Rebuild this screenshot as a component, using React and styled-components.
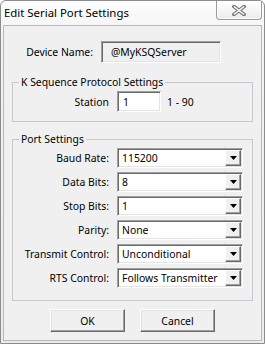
import React from 'react'
import styled, { createGlobalStyle } from 'styled-components'

const GlobalStyle = createGlobalStyle`
  html, body {
    margin: 0;
    padding: 0;
    background: #ffffff;
  }
  body {
    font-family: "Noto Sans", "Open Sans", sans-serif;
    font-size: 10.4px;
    color: #000;
  }
`

const portRows = [
  { label: 'Baud Rate:', value: '115200' },
  { label: 'Data Bits:', value: '8' },
  { label: 'Stop Bits:', value: '1' },
  { label: 'Parity:', value: 'None' },
  { label: 'Transmit Control:', value: 'Unconditional' },
  { label: 'RTS Control:', value: 'Follows Transmitter' },
]

const CloseIcon = () => (
  <svg width="14" height="11" viewBox="0 0 14 11">
    <path d="M2 1.5 L12 9.5 M12 1.5 L2 9.5" stroke="#7d7d7d" strokeWidth="3.6" strokeLinecap="square" fill="none" />
    <path d="M2 1.5 L12 9.5 M12 1.5 L2 9.5" stroke="#ffffff" strokeWidth="1.4" strokeLinecap="butt" fill="none" />
  </svg>
)

const DropArrow = () => (
  <svg width="7" height="4" viewBox="0 0 7 4">
    <path d="M0 0 H7 L3.5 4 Z" fill="#000" />
  </svg>
)

const App = () => {
  return (
    <>
      <GlobalStyle />
      <Window>
        <TitleBar>
          <Title>Edit Serial Port Settings</Title>
          <CloseButton><CloseIcon /></CloseButton>
        </TitleBar>
        <Client>
          <NameRow>
            <NameLabel>Device Name:</NameLabel>
            <TextBox readOnly width={120} height={22} indent={9}>@MyKSQServer</TextBox>
          </NameRow>

          <Group>
            <Legend>K Sequence Protocol Settings</Legend>
            <Row>
              <FieldLabel>Station</FieldLabel>
              <TextBox width={44} height={21} indent={5}>1</TextBox>
              <Hint>1 - 90</Hint>
            </Row>
          </Group>

          <Group bottom={12}>
            <Legend>Port Settings</Legend>
            <Rows>
              {portRows.map((r) => (
                <Row key={r.label}>
                  <FieldLabel>{r.label}</FieldLabel>
                  <Combo>
                    <ComboValue>{r.value}</ComboValue>
                    <DropButton><DropArrow /></DropButton>
                  </Combo>
                </Row>
              ))}
            </Rows>
          </Group>

          <Buttons>
            <PushButton>OK</PushButton>
            <PushButton>Cancel</PushButton>
          </Buttons>
        </Client>
      </Window>
    </>
  )
}

export default App

const Window = styled.div`
box-sizing: border-box;
width: 265px;
height: 344px;
display: flex;
flex-direction: column;
border: 1px solid #8c8c8c;
border-radius: 6px 6px 0 0;
padding: 0 2px 2px 2px;
background: linear-gradient(#fdfdfd, #f2f2f2 40px, #ececec);
`

const TitleBar = styled.div`
height: 24px;
display: flex;
justify-content: space-between;
align-items: flex-start;
flex-shrink: 0;
`

const Title = styled.div`
padding: 4px 0 0 1px;
font-size: 11.4px;
line-height: 16px;
color: #000;
`

const CloseButton = styled.div`
box-sizing: border-box;
width: 46px;
height: 19px;
display: flex;
align-items: center;
justify-content: center;
border: 1px solid #9a9a9a;
border-top: none;
border-radius: 0 0 4px 4px;
background: linear-gradient(#ffffff, #ececec);
box-shadow: inset 0 0 0 1px rgba(255, 255, 255, 0.8);
`

const Client = styled.div`
flex: 1;
display: flex;
flex-direction: column;
background: #f0f0f0;
border: 1px solid #b9b9b9;
padding-top: 15px;
`

const NameRow = styled.div`
display: flex;
align-items: center;
`

const NameLabel = styled.div`
width: 89px;
margin-right: 8px;
text-align: right;
`

const TextBox = styled.div`
box-sizing: border-box;
width: ${(p) => p.width}px;
height: ${(p) => p.height}px;
padding-left: ${(p) => p.indent}px;
display: flex;
align-items: center;
background: ${(p) => (p.readOnly ? '#f0f0f0' : '#ffffff')};
border: 1px solid;
border-color: #a0a0a0 #ffffff #ffffff #a0a0a0;
box-shadow: inset 1px 1px 0 #696969, inset -1px -1px 0 #e3e3e3;
`

const Group = styled.fieldset`
margin: 11px 8px 0 8px;
padding: 1px 8px ${(p) => p.bottom || 9}px 0;
border: 1px solid #c5c9cd;
min-width: 0;
& + & {
  margin-top: 9px;
}
`

const Legend = styled.legend`
margin-left: 6px;
padding: 0 2px;
line-height: 16px;
`

const Rows = styled.div`
display: flex;
flex-direction: column;
gap: 4px;
`

const Row = styled.div`
display: flex;
align-items: center;
`

const FieldLabel = styled.div`
width: 96px;
margin-right: 8px;
text-align: right;
white-space: nowrap;
`

const Hint = styled.div`
margin-left: 6px;
`

const Combo = styled.div`
box-sizing: border-box;
width: 126px;
height: 20px;
display: flex;
align-items: stretch;
background: #ffffff;
border: 1px solid;
border-color: #a0a0a0 #ffffff #ffffff #a0a0a0;
box-shadow: inset 1px 1px 0 #696969, inset -1px -1px 0 #e3e3e3;
padding: 1px;
`

const ComboValue = styled.div`
flex: 1;
display: flex;
align-items: center;
padding-left: 3px;
white-space: nowrap;
overflow: hidden;
`

const DropButton = styled.div`
box-sizing: border-box;
width: 16px;
display: flex;
align-items: center;
justify-content: center;
background: #f0f0f0;
border: 1px solid;
border-color: #ffffff #696969 #696969 #ffffff;
box-shadow: inset -1px -1px 0 #a0a0a0;
`

const Buttons = styled.div`
display: flex;
justify-content: center;
gap: 15px;
margin-top: 8px;
`

const PushButton = styled.div`
box-sizing: border-box;
width: 75px;
height: 23px;
display: flex;
align-items: center;
justify-content: center;
background: #f0f0f0;
border: 1px solid;
border-color: #ffffff #696969 #696969 #ffffff;
box-shadow: inset -1px -1px 0 #a0a0a0, inset 1px 1px 0 #e3e3e3;
`
